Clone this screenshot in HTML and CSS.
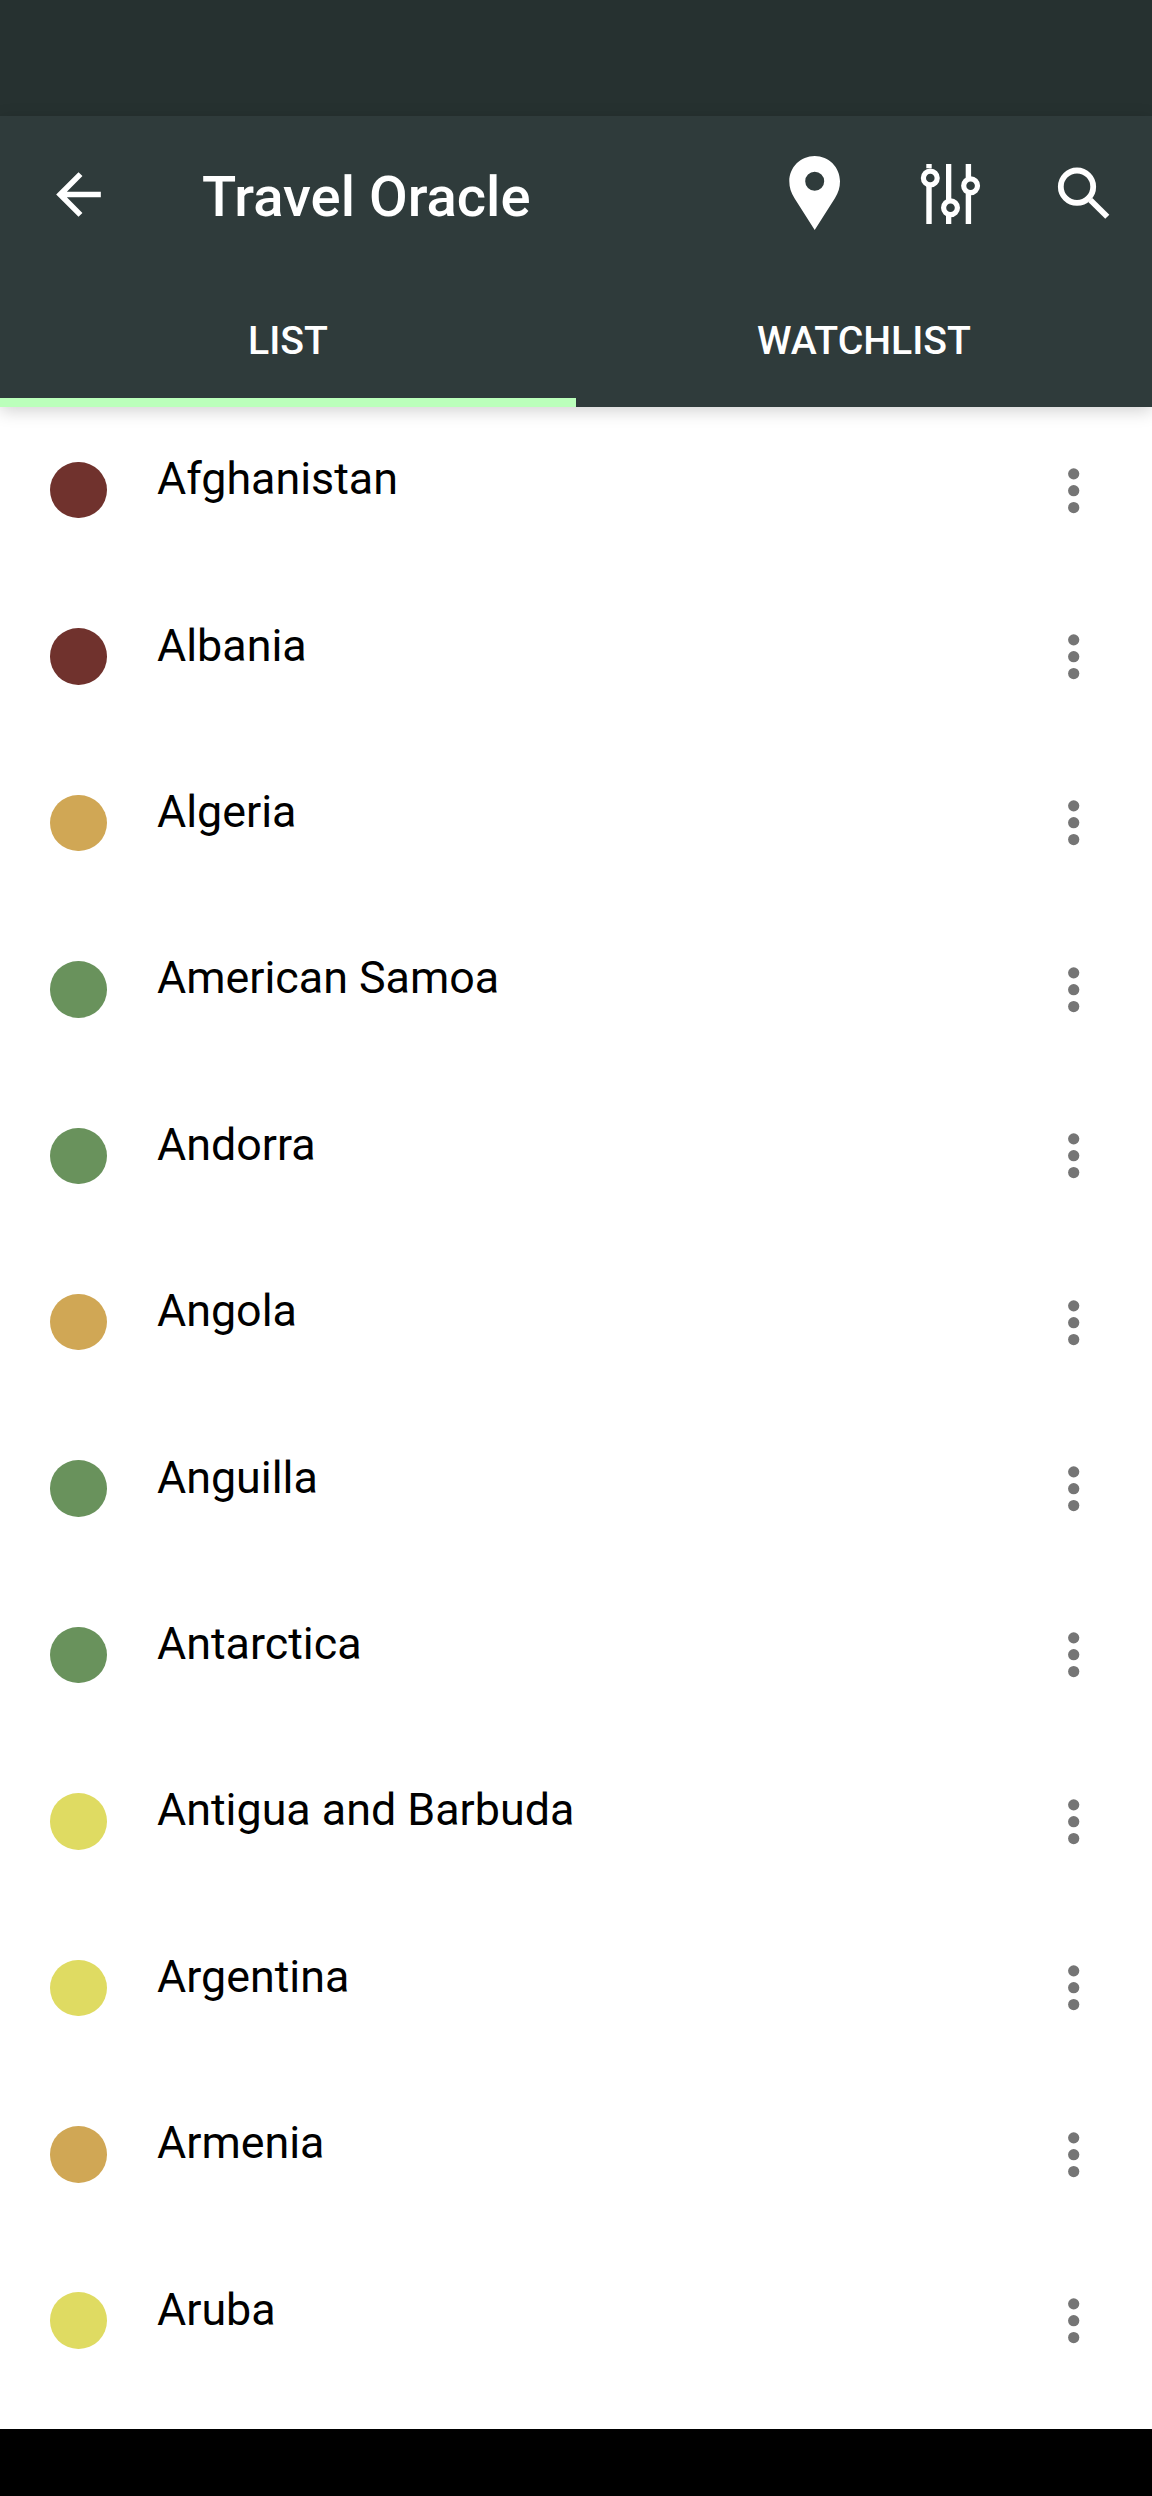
FILE: index.html
```html
<!DOCTYPE html>
<html lang="en">
<head>
<meta charset="utf-8">
<title>Travel Oracle</title>
<link rel="stylesheet" href="styles.css">
</head>
<body>
<div class="status-bar"></div>
<header class="app-header">
  <div class="toolbar">
    <svg class="icon-back" viewBox="0 0 24 24"><path d="M20 11H7.83l5.59-5.59L12 4l-8 8 8 8 1.41-1.41L7.83 13H20v-2z"/></svg>
    <h1 class="title">Travel Oracle</h1>
    <svg class="icon-pin" viewBox="0 0 70 90"><path fill-rule="evenodd" d="M34.7 6C20.700 6 9.300 17.200 9.300 31.300C9.300 37.500 11 42.500 14.500 48.200L34.700 80L54.900 48.200C58.400 42.500 60 37.500 60 31.300C60 17.200 48.700 6 34.700 6ZM34.700 21.800A9.500 9.500 0 1 1 34.700 40.800A9.500 9.500 0 1 1 34.700 21.800Z"/></svg>
    <svg class="icon-tune" viewBox="0 0 70 80">
      <path d="M11.300 9h5.400v4.300h-5.400zM11.300 31h5.400v38h-5.400zM31 9h5.300v36h-5.300zM31 61h5.300v8h-5.300zM50.700 9h5.400v14h-5.400zM50.700 39h5.400v30h-5.400z"/>
      <g class="knobs"><circle cx="15.300" cy="23" r="6.900"/><circle cx="35.500" cy="52.700" r="6.900"/><circle cx="55.600" cy="30.700" r="6.900"/></g>
    </svg>
    <svg class="icon-search" viewBox="0 0 70 70"><circle cx="27" cy="26.700" r="16.200"/><path d="M40.300 40L57.300 56.700"/></svg>
  </div>
  <nav class="tabs">
    <div class="tab tab-active">LIST</div>
    <div class="tab">WATCHLIST</div>
  </nav>
</header>
<main class="list" id="list"></main>
<div class="nav-bar"></div>
<script src="list.js"></script>
</body>
</html>
```
FILE: styles.css
```css
* { box-sizing: border-box; }
body {
  margin: 0;
  height: 2496px;
  display: flex;
  flex-direction: column;
  overflow: hidden;
  background: #fff;
  font-family: Roboto, "Liberation Sans", sans-serif;
}
.status-bar { height: 116px; flex: none; background: #263130; }
.app-header {
  height: 291px;
  flex: none;
  display: flex;
  flex-direction: column;
  background: #2f3b3b;
  color: #fff;
  box-shadow: 0 4px 16px rgba(0, 0, 0, .18);
}
.toolbar { height: 157px; display: flex; align-items: center; padding-left: 45px; }
.toolbar svg { flex: none; fill: #fff; }
.icon-back { width: 67px; height: 67px; }
.title { margin: 5px auto 0 90px; font-size: 56.2px; line-height: 66px; font-weight: 500; white-space: nowrap; }
.icon-pin { width: 70px; height: 90px; margin-right: 65px; }
.icon-tune { width: 70px; height: 80px; margin-right: 65px; }
.icon-search { width: 70px; height: 70px; margin-right: 32px; }
.icon-tune .knobs { fill: none; stroke: #fff; stroke-width: 5.2; }
.toolbar .icon-search { fill: none; stroke: #fff; stroke-width: 5.8; }
.tabs { flex: 1; display: flex; }
.tab {
  flex: 1;
  display: flex;
  align-items: center;
  justify-content: center;
  padding-top: 11px;
  border-bottom: 9px solid transparent;
  font-size: 39.2px;
  font-weight: 500;
}
.tab-active { border-bottom-color: #bbffbb; }
.list { flex: 1; min-height: 0; overflow: hidden; }
.row { height: 166.410px; display: flex; align-items: center; padding: 0 45px 0 50px; }
.dot { width: 56.500px; height: 56.500px; border-radius: 50%; flex: none; }
.red { background: #70322d; }
.orange { background: #d0a755; }
.green { background: #69925c; }
.yellow { background: #dfdb62; }
.name { flex: 1; margin: -22px 0 0 50.500px; font-size: 44.8px; line-height: 54px; color: #000; white-space: nowrap; }
.more { width: 67.400px; height: 67.400px; flex: none; fill: #757575; }
.nav-bar { height: 67px; flex: none; background: #000; }
.app-header, .nav-bar { position: relative; }
```
FILE: list.js
```js
const countries = [
  ["Afghanistan", "red"], ["Albania", "red"], ["Algeria", "orange"],
  ["American Samoa", "green"], ["Andorra", "green"], ["Angola", "orange"],
  ["Anguilla", "green"], ["Antarctica", "green"], ["Antigua and Barbuda", "yellow"],
  ["Argentina", "yellow"], ["Armenia", "orange"], ["Aruba", "yellow"]
];
document.getElementById("list").innerHTML = countries.map(([name, level]) => `
  <div class="row">
    <span class="dot ${level}"></span>
    <span class="name">${name}</span>
    <svg class="more" viewBox="0 0 24 24"><circle cx="12" cy="6" r="2"/><circle cx="12" cy="12" r="2"/><circle cx="12" cy="18" r="2"/></svg>
  </div>`).join("");
```
